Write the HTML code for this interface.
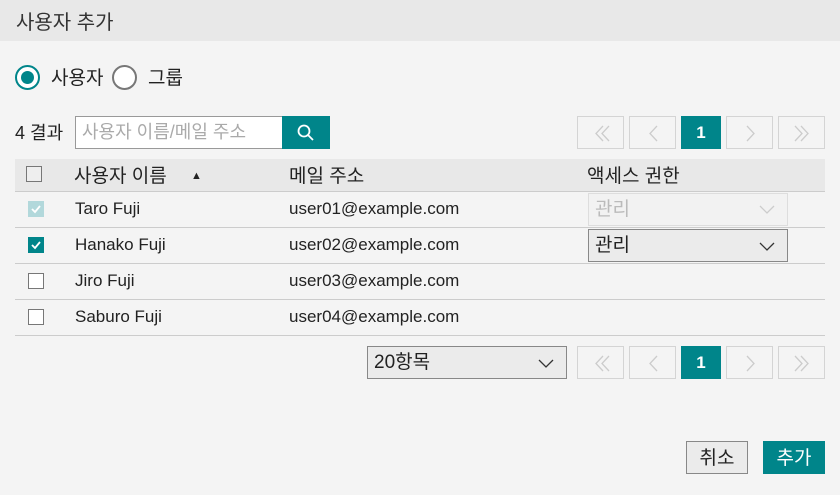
<!DOCTYPE html>
<html><head><meta charset="utf-8"><style>
*{box-sizing:border-box;margin:0;padding:0}
body{width:840px;height:495px;background:#f4f4f4;position:relative;overflow:hidden;font-family:"Liberation Sans","Noto Sans CJK KR",sans-serif;color:#222;font-size:17px}
.a{position:absolute}
.hdr{left:0;top:0;width:840px;height:41px;background:#e8e8e8}
.t{white-space:nowrap;height:34px;line-height:34px}
.pg{position:absolute;width:47px;height:33px;border:1px solid #d4d4d4;background:#f4f4f4}
.pg svg{position:absolute;left:0;top:0}
.cur{position:absolute;width:40px;height:33px;background:#00858a;color:#fff;font-weight:bold;font-size:17px;text-align:center;line-height:33px}
.cb{position:absolute;width:16px;height:16px;border:1.5px solid #777;background:#fff}
.line{position:absolute;left:15px;width:810px;height:1px;background:#ccc}
.sel{position:absolute;border:1px solid #888;background:#ebebeb}
.k{font-size:19px}
</style></head><body>
<div class="a hdr"></div>
<div class="a t" style="left:16px;top:6px;font-size:20px;color:#333">사용자 추가</div>

<div class="a" style="left:15px;top:65px;width:25px;height:25px;border:2px solid #00858a;border-radius:50%;background:#fff"></div>
<div class="a" style="left:21px;top:71px;width:13px;height:13px;border-radius:50%;background:#00858a"></div>
<div class="a t k" style="left:51px;top:62px">사용자</div>
<div class="a" style="left:112px;top:65px;width:25px;height:25px;border:2px solid #777;border-radius:50%;background:#fff"></div>
<div class="a t k" style="left:148px;top:62px">그룹</div>

<div class="a t" style="left:15px;top:116px;font-size:18px">4 결과</div>
<div class="a" style="left:75px;top:116px;width:208px;height:33px;border:1px solid #999;background:#fff"></div>
<div class="a t" style="left:82px;top:115px;color:#aaa;font-size:18px">사용자 이름/메일 주소</div>
<div class="a" style="left:282px;top:116px;width:48px;height:33px;background:#00858a">
<svg width="48" height="33"><circle cx="22" cy="15" r="5.5" fill="none" stroke="#fff" stroke-width="1.8"/><line x1="26" y1="19" x2="31" y2="24" stroke="#fff" stroke-width="1.8"/></svg></div>

<div class="pg" style="left:577px;top:116px"><svg width="47" height="33"><path d="M25 9 L18 16.5 L25 24 M31 9 L24 16.5 L31 24" fill="none" stroke="#ccc" stroke-width="1.3"/></svg></div>
<div class="pg" style="left:629px;top:116px"><svg width="47" height="33"><path d="M27 9 L20 16.5 L27 24" fill="none" stroke="#ccc" stroke-width="1.3"/></svg></div>
<div class="cur" style="left:681px;top:116px">1</div>
<div class="pg" style="left:726px;top:116px"><svg width="47" height="33"><path d="M20 9 L27 16.5 L20 24" fill="none" stroke="#ccc" stroke-width="1.3"/></svg></div>
<div class="pg" style="left:778px;top:116px"><svg width="47" height="33"><path d="M16 9 L23 16.5 L16 24 M22 9 L29 16.5 L22 24" fill="none" stroke="#ccc" stroke-width="1.3"/></svg></div>

<div class="a" style="left:15px;top:159px;width:810px;height:32px;background:#e8e8e8"></div>
<div class="line" style="top:191px"></div>
<div class="cb" style="left:26px;top:166px;background:#eee"></div>
<div class="a t k" style="left:74px;top:160px">사용자 이름</div>
<div class="a t" style="left:191px;top:159px;font-size:11px">▲</div>
<div class="a t k" style="left:289px;top:160px">메일 주소</div>
<div class="a t k" style="left:587px;top:160px">액세스 권한</div>

<div class="line" style="top:227px"></div>
<div class="line" style="top:263px"></div>
<div class="line" style="top:299px"></div>
<div class="line" style="top:335px"></div>

<div class="cb" style="left:28px;top:201px;border:none;background:#b2d8db"><svg width="16" height="16"><path d="M4 8 L7 11 L12 5" fill="none" stroke="#fff" stroke-width="1.8"/></svg></div>
<div class="a t" style="left:75px;top:192px">Taro Fuji</div>
<div class="a t" style="left:289px;top:192px">user01@example.com</div>
<div class="sel" style="left:588px;top:193px;width:200px;height:33px;border-color:#ddd;background:#f2f2f2"></div>
<div class="a t k" style="left:595px;top:193px;color:#bbb">관리</div>
<svg class="a" style="left:758px;top:203px" width="18" height="12"><path d="M2 3 L9 10 L16 3" fill="none" stroke="#ccc" stroke-width="1.3"/></svg>

<div class="cb" style="left:28px;top:237px;border:none;background:#00858a"><svg width="16" height="16"><path d="M4 8 L7 11 L12 5" fill="none" stroke="#fff" stroke-width="1.8"/></svg></div>
<div class="a t" style="left:75px;top:228px">Hanako Fuji</div>
<div class="a t" style="left:289px;top:228px">user02@example.com</div>
<div class="sel" style="left:588px;top:229px;width:200px;height:33px"></div>
<div class="a t k" style="left:595px;top:229px">관리</div>
<svg class="a" style="left:758px;top:240px" width="18" height="12"><path d="M2 3 L9 10 L16 3" fill="none" stroke="#333" stroke-width="1.3"/></svg>

<div class="cb" style="left:28px;top:273px"></div>
<div class="a t" style="left:75px;top:264px">Jiro Fuji</div>
<div class="a t" style="left:289px;top:264px">user03@example.com</div>

<div class="cb" style="left:28px;top:309px"></div>
<div class="a t" style="left:75px;top:300px">Saburo Fuji</div>
<div class="a t" style="left:289px;top:300px">user04@example.com</div>

<div class="sel" style="left:367px;top:346px;width:200px;height:33px"></div>
<div class="a t k" style="left:374px;top:346px">20항목</div>
<svg class="a" style="left:537px;top:357px" width="18" height="12"><path d="M2 3 L9 10 L16 3" fill="none" stroke="#333" stroke-width="1.3"/></svg>

<div class="pg" style="left:577px;top:346px"><svg width="47" height="33"><path d="M25 9 L18 16.5 L25 24 M31 9 L24 16.5 L31 24" fill="none" stroke="#ccc" stroke-width="1.3"/></svg></div>
<div class="pg" style="left:629px;top:346px"><svg width="47" height="33"><path d="M27 9 L20 16.5 L27 24" fill="none" stroke="#ccc" stroke-width="1.3"/></svg></div>
<div class="cur" style="left:681px;top:346px">1</div>
<div class="pg" style="left:726px;top:346px"><svg width="47" height="33"><path d="M20 9 L27 16.5 L20 24" fill="none" stroke="#ccc" stroke-width="1.3"/></svg></div>
<div class="pg" style="left:778px;top:346px"><svg width="47" height="33"><path d="M16 9 L23 16.5 L16 24 M22 9 L29 16.5 L22 24" fill="none" stroke="#ccc" stroke-width="1.3"/></svg></div>

<div class="a" style="left:686px;top:441px;width:62px;height:33px;border:1px solid #888;background:#ebebeb;text-align:center;line-height:33px;font-size:19px">취소</div>
<div class="a" style="left:763px;top:441px;width:62px;height:33px;background:#00858a;color:#fff;text-align:center;line-height:35px;font-size:19px">추가</div>
</body></html>
